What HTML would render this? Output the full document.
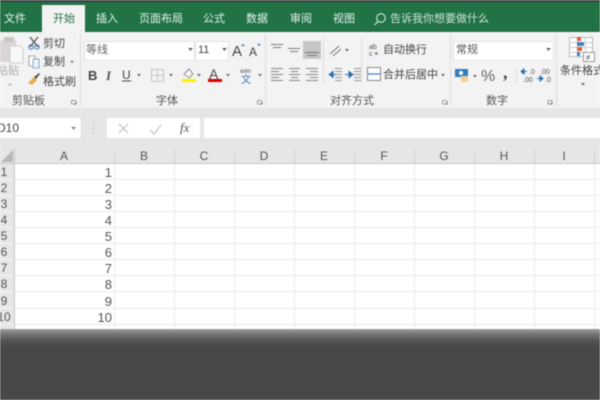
<!DOCTYPE html>
<html><head><meta charset="utf-8"><style>
html,body{margin:0;padding:0;background:#fff}
#p{position:relative;width:600px;height:400px;overflow:hidden;background:#fff;font-family:"Liberation Sans","Noto Sans CJK SC",sans-serif;color:#444;filter:blur(.4px)}
#p div{position:absolute;white-space:nowrap}
.t{font-size:11px;line-height:14px;color:#444}
.tab{font-size:11px;line-height:14px;top:12px;color:#e8f2ec}
.g{font-size:11px;line-height:14px;color:#555;top:94px}
.sep{top:34px;width:1px;height:72px;background:#dcdcdc}
.ch{top:149px;height:14px;line-height:15px;text-align:center;font-size:12px;color:#555;width:60px}
.rh{left:-6px;width:20px;text-align:center;font-size:12px;height:15px;line-height:15px;color:#555}
.v{left:15px;width:97px;text-align:right;font-size:13px;height:16px;line-height:17px;color:#555}
svg{position:absolute;left:0;top:0}
</style></head><body><div id="p">
<div style="left:0;top:0;width:600px;height:2px;background:#3f3f3f"></div>
<div style="left:0;top:2px;width:600px;height:30px;background:#217346"></div>
<div style="left:0;top:32px;width:600px;height:76px;background:#f3f3f3"></div>
<div style="left:42px;top:5px;width:43px;height:28px;background:#f3f3f3"></div>
<div style="left:0;top:108px;width:600px;height:55px;background:#e6e6e6"></div>
<div class="tab" style="left:4px">文件</div>
<div class="tab" style="left:53px;color:#217346">开始</div>
<div class="tab" style="left:96px">插入</div>
<div class="tab" style="left:139px">页面布局</div>
<div class="tab" style="left:203px">公式</div>
<div class="tab" style="left:246px">数据</div>
<div class="tab" style="left:290px">审阅</div>
<div class="tab" style="left:333px">视图</div>
<div class="tab" style="left:390px;color:#cfe3d8">告诉我你想要做什么</div>

<div class="sep" style="left:80px"></div><div class="sep" style="left:265px"></div><div class="sep" style="left:450px"></div><div class="sep" style="left:556px"></div>
<div style="left:361px;top:38px;width:1px;height:46px;background:#dcdcdc"></div>
<div style="left:323px;top:38px;width:1px;height:46px;background:#dcdcdc"></div>
<div style="left:516px;top:68px;width:1px;height:16px;background:#dcdcdc"></div>

<div style="left:84px;top:41px;width:109px;height:18px;background:#fff;border:1px solid #e2e2e2"></div>
<div style="left:195px;top:41px;width:32px;height:18px;background:#fff;border:1px solid #e2e2e2"></div>
<div style="left:453px;top:41px;width:99px;height:18px;background:#fff;border:1px solid #e2e2e2"></div>
<div class="t" style="left:86px;top:43px;color:#666">等线</div>
<div class="t" style="left:198px;top:43px">11</div>
<div class="t" style="left:456px;top:43px;color:#555">常规</div>

<svg width="600" height="400" viewBox="0 0 600 400">
<!-- paste -->
<rect x="0" y="40" width="16" height="22" fill="#d9d5d5"/><rect x="4" y="37" width="10" height="5" fill="#c9c6c6"/>
<path d="M10 46h10l3 3v14H10z" fill="#f8f8f8" stroke="#cfcfcf"/>
<path d="M8 84l2 2 2-2z" fill="#aaa"/>
<!-- scissors -->
<path d="M30 37l8 10M38 37l-8 10" stroke="#555" stroke-width="1.3" fill="none"/><circle cx="31" cy="47" r="2.2" fill="none" stroke="#3a78b8"/><circle cx="37" cy="47" r="2.2" fill="none" stroke="#3a78b8"/>
<!-- copy -->
<path d="M29 56h6v10h-6z" fill="#fff" stroke="#8a8a8a" stroke-width=".8"/><path d="M33 59h6v9h-6z" fill="#eaf2fa" stroke="#6d96bd" stroke-width=".8"/>
<path d="M70 61h4l-2 2z" fill="#666"/>
<!-- brush -->
<path d="M28 83l6-6 3 3-5 5z" fill="#e0b050"/><path d="M34 77l5-4 1 1-4 5z" fill="#555"/>
<!-- dropdown arrows -->
<path d="M188 48h5l-2.500 3zM222 48h5l-2.500 3zM546 48h5l-2.500 3zM137 74h4l-2 2.500zM169 74h4l-2 2.500zM197 74h4l-2 2.500zM226 74h4l-2 2.500zM258 74h4l-2 2.500zM345 49h4l-2 2.500zM441 74h4l-2 2.500zM473 75h4l-2 2.500zM581 83h4l-2 2.500z" fill="#666"/>
<!-- A grow shrink -->
<text x="232" y="56" font-size="15" fill="#444" font-family="Liberation Sans">A</text><path d="M241 46l2-2 2 2z" fill="#3a78b8"/>
<text x="249" y="56" font-size="12" fill="#444" font-family="Liberation Sans">A</text><path d="M257 44h4l-2 2z" fill="#3a78b8"/>
<!-- B I U -->
<text x="88" y="80" font-size="13" font-weight="bold" fill="#444" font-family="Liberation Sans">B</text>
<text x="106" y="80" font-size="13" font-style="italic" font-weight="bold" fill="#555" font-family="Liberation Serif">I</text>
<text x="122" y="79" font-size="12" fill="#444" font-family="Liberation Sans">U</text><path d="M122 81h9" stroke="#444"/>
<!-- border -->
<path d="M151.500 69.500h12v12h-12zM157.500 69.500v12M151.500 75.500h12" fill="none" stroke="#c4c4c4"/>
<!-- fill -->
<path d="M184 74l5-5 4 5-4 4z" fill="#f5f5f5" stroke="#777" stroke-width=".8"/><rect x="182" y="79" width="14" height="3" fill="#ffef00"/>
<!-- font colour -->
<text x="209" y="79" font-size="14" fill="#444" font-family="Liberation Sans">A</text><rect x="208" y="79" width="14" height="3" fill="#e00000"/>
<!-- wen -->
<text x="240" y="73" font-size="6" fill="#555" font-family="Liberation Sans">wén</text>
<text x="241" y="83" font-size="10" fill="#3a78b8" font-family="Noto Sans CJK SC">文</text>
<!-- align top -->
<rect x="303" y="41" width="18" height="18" fill="#c6c6c6"/>
<path d="M271 44.500h12M273 47.500h8M288 48.500h12M290 51.500h8M305 52.500h14M307 55.500h10" stroke="#777" fill="none"/>
<!-- h align -->
<path d="M271 68.500h12M271 71.500h8M271 74.500h12M271 77.500h8M271 80.500h12M289 68.500h11M291 71.500h7M289 74.500h11M291 77.500h7M289 80.500h11M306 68.500h12M310 71.500h8M306 74.500h12M310 77.500h8M306 80.500h12" stroke="#888" fill="none"/>
<!-- indent -->
<path d="M335 68.500h7M335 71.500h7M335 74.500h7M335 77.500h7M335 80.500h7M354 68.500h7M354 71.500h7M354 74.500h7M354 77.500h7M354 80.500h7" stroke="#999" fill="none"/>
<path d="M329 74.500l4-3v6zM333 74.500h3M353 74.500l-4-3v6zM345 74.500h4" fill="#2f6fb0" stroke="#2f6fb0"/>
<!-- orientation -->
<path d="M330 54l9-8M333 56l8-7" stroke="#777" fill="none"/>
<!-- wrap -->
<text x="369" y="49" font-size="7" fill="#555" font-family="Liberation Sans">ab</text><text x="369" y="56" font-size="7" fill="#555" font-family="Liberation Sans">c</text><path d="M375 54h3M375 54l2-2" stroke="#3a78b8" fill="none"/>
<!-- merge -->
<rect x="367.500" y="67.500" width="13" height="13" fill="#fff" stroke="#888"/><path d="M368 74h12" stroke="#5a9bd5" stroke-width="1.500"/>
<!-- accounting -->
<rect x="455" y="69" width="13" height="8" fill="#2f7fc0"/><circle cx="461" cy="73" r="2" fill="#fff"/><rect x="461" y="76" width="7" height="6" fill="#f3cf9a"/>
<text x="481" y="81" font-size="16" fill="#666" font-family="Liberation Sans">%</text>
<text x="503" y="78" font-size="18" font-weight="bold" fill="#444" font-family="Liberation Serif">,</text>
<text x="529" y="74" font-size="7" fill="#555" font-family="Liberation Sans">.0</text><text x="523" y="82" font-size="7" fill="#555" font-family="Liberation Sans">.00</text>
<path d="M521 71.500l3-2.500v5zM524 71.500h3M543 78.500l-3-2.500v5zM537 78.500h3" fill="#2f6fb0" stroke="#2f6fb0"/>
<text x="540" y="74" font-size="7" fill="#555" font-family="Liberation Sans">.00</text><text x="545" y="82" font-size="7" fill="#555" font-family="Liberation Sans">.0</text>
<!-- cond format -->
<rect x="569.500" y="37.500" width="23" height="19" fill="#fff" stroke="#bbb"/>
<path d="M569 42.500h23M569 47.500h23M569 52.500h23M577.500 37v19M585.500 37v19" stroke="#ccc" fill="none"/>
<rect x="577" y="37" width="4" height="4" fill="#d9603c"/><rect x="577" y="42" width="7" height="4" fill="#3f7fc0"/><rect x="577" y="47" width="5" height="4" fill="#d9603c"/><rect x="577" y="52" width="3" height="4" fill="#3f7fc0"/>
<rect x="583.500" y="52.500" width="11" height="9" fill="#fff" stroke="#999"/>
<text x="586" y="60" font-size="8" fill="#444" font-family="Liberation Sans">≠</text>
<!-- dialog launchers -->
<path d="M71.500 100.500v4M71.500 100.500h4M257.500 100.500v4M257.500 100.500h4M442.500 100.500v4M442.500 100.500h4M548 100.500v4M548 100.500h4" stroke="#999" fill="none"/>
<path d="M73 104h3v-3M259 104h3v-3M444 104h3v-3M549 104h3v-3" stroke="#777" fill="none"/>
<!-- search icon -->
<circle cx="381" cy="18" r="4.300" fill="none" stroke="#d8e8df" stroke-width="1.100"/><path d="M378 21.500l-3.500 3.500" stroke="#d8e8df" stroke-width="1.200"/>
</svg>

<div class="t" style="left:43px;top:37px">剪切</div>
<div class="t" style="left:43px;top:55px">复制</div>
<div class="t" style="left:43px;top:75px">格式刷</div>
<div class="t" style="left:-3px;top:64px;color:#aaa">粘贴</div>
<div class="t" style="left:383px;top:43px">自动换行</div>
<div class="t" style="left:383px;top:68px">合并后居中</div>
<div class="t" style="left:560px;top:64px">条件格式</div>
<div class="g" style="left:12px">剪贴板</div>
<div class="g" style="left:156px">字体</div>
<div class="g" style="left:330px">对齐方式</div>
<div class="g" style="left:486px">数字</div>

<!-- formula bar -->
<div style="left:-2px;top:118px;width:83px;height:20px;background:#fff;border-right:1px solid #dcdcdc"></div>
<div class="t" style="left:-3px;top:121px;font-size:12px;color:#444">D10</div>
<div style="left:107px;top:118px;width:93px;height:20px;background:#fff"></div>
<div style="left:204px;top:118px;width:396px;height:20px;background:#fff"></div>
<svg width="600" height="400" viewBox="0 0 600 400"><path d="M71 127h5l-2.500 2.500z" fill="#777"/>
<path d="M93.500 124v1M93.500 128v1M93.500 132v1" stroke="#999"/>
<path d="M119 124l9 9M128 124l-9 9" stroke="#c8c8c8" stroke-width="1.300" fill="none"/>
<path d="M150 130l4 4 7-9" stroke="#c8c8c8" stroke-width="1.300" fill="none"/></svg>
<div style="left:180px;top:120px;font:italic 13px 'Liberation Serif',serif;line-height:15px;color:#555">fx</div>

<!-- headers -->
<div style="left:0;top:163px;width:15px;height:170px;background:#e6e6e6"></div>
<svg width="600" height="400" viewBox="0 0 600 400">
<g stroke="#ebebeb" fill="none">
<path d="M15 179.500h585M15 195.500h585M15 211.500h585M15 227.500h585M15 243.500h585M15 259.500h585M15 275.500h585M15 291.500h585M15 308.500h585M15 324.500h585"/>
<path d="M114.500 163v170M174.500 163v170M234.500 163v170M294.500 163v170M354.500 163v170M414.500 163v170M474.500 163v170M534.500 163v170M594.500 163v170"/></g>
<path d="M0 179.500h15M0 195.500h15M0 211.500h15M0 227.500h15M0 243.500h15M0 259.500h15M0 275.500h15M0 291.500h15M0 308.500h15M0 324.500h15" stroke="#f5f5f5"/>
<path d="M0 163.500h600" stroke="#c8c8c8"/><path d="M14.500 149v184" stroke="#c8c8c8"/>
<path d="M114.500 150v13M174.500 150v13M234.500 150v13M294.500 150v13M354.500 150v13M414.500 150v13M474.500 150v13M534.500 150v13M594.500 150v13" stroke="#d0d0d0"/>
<path d="M1 162l12-12v12z" fill="#b8b8b8"/>
</svg>
<div class="ch" style="left:34px">A</div><div class="ch" style="left:114px">B</div><div class="ch" style="left:174px">C</div><div class="ch" style="left:234px">D</div><div class="ch" style="left:294px">E</div><div class="ch" style="left:354px">F</div><div class="ch" style="left:414px">G</div><div class="ch" style="left:474px">H</div><div class="ch" style="left:534px">I</div>

<div class="rh" style="top:165px">1</div><div class="rh" style="top:181px">2</div><div class="rh" style="top:197px">3</div><div class="rh" style="top:213px">4</div><div class="rh" style="top:229px">5</div><div class="rh" style="top:245px">6</div><div class="rh" style="top:261px">7</div><div class="rh" style="top:277px">8</div><div class="rh" style="top:294px">9</div><div class="rh" style="top:310px">10</div>
<div class="v" style="top:164px">1</div><div class="v" style="top:180px">2</div><div class="v" style="top:196px">3</div><div class="v" style="top:212px">4</div><div class="v" style="top:228px">5</div><div class="v" style="top:244px">6</div><div class="v" style="top:260px">7</div><div class="v" style="top:276px">8</div><div class="v" style="top:293px">9</div><div class="v" style="top:309px">10</div>

<div style="left:0;top:329px;width:600px;height:71px;background:linear-gradient(#a0a0a0 0,#767676 5px,#575757 11px,#484848 17px,#484848 100%)"></div>
</div></body></html>
